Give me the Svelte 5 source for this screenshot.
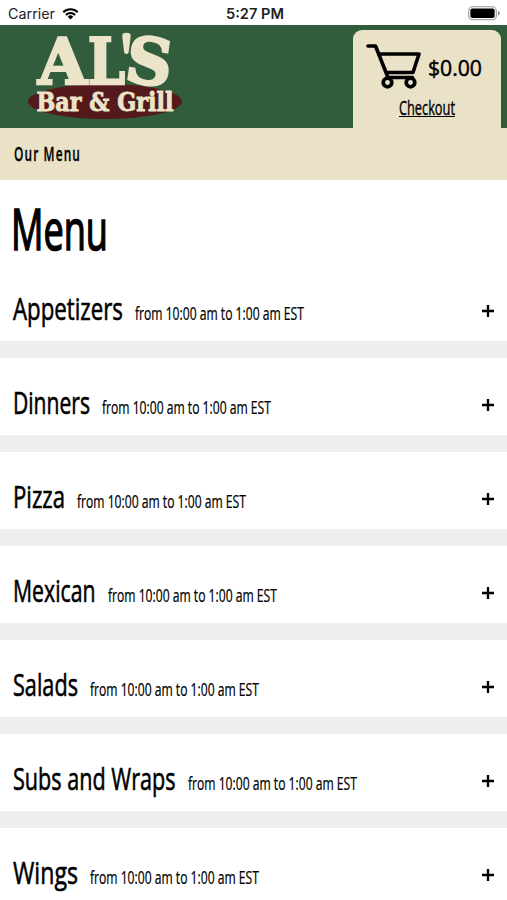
<script>
  const hours = 'from 10:00 am to 1:00 am EST';

  const categories = [
    { name: 'Appetizers', width: 110 },
    { name: 'Dinners', width: 77 },
    { name: 'Pizza', width: 52 },
    { name: 'Mexican', width: 82.5 },
    { name: 'Salads', width: 65 },
    { name: 'Subs and Wraps', width: 162.5 },
    { name: 'Wings', width: 65 }
  ];

  let open = $state('');

  function toggle(name) {
    open = open === name ? '' : name;
  }

  // Condense a text horizontally so that it fills the given width
  function squeeze(node, { x = 0, y = 0, width }) {
    const scale = width / node.getComputedTextLength();
    node.setAttribute('transform', `translate(${x} ${y}) scale(${scale} 1)`);
  }
</script>

{#snippet narrow(text, width, height)}
  <svg class="narrow" {width} {height}>
    <text use:squeeze={{ y: height, width }}>{text}</text>
  </svg>
{/snippet}

<div class="screen">
  <div class="status">
    <div class="carrier">
      {@render narrow('Carrier', 47, 11)}
      <svg class="wifi" width="17" height="13" viewBox="0 0 17 13">
        <path d="M1.3 5.2a10.2 10.2 0 0 1 14.4 0M3.9 7.9a6.5 6.5 0 0 1 9.2 0" fill="none" stroke="#000" stroke-width="2.1" />
        <path d="M5.7 9.7a4 4 0 0 1 5.6 0L8.5 12.5z" />
      </svg>
    </div>
    <div class="time">{@render narrow('5:27 PM', 58, 11)}</div>
    <svg class="battery" width="33" height="15" viewBox="0 0 33 15">
      <rect x="0.7" y="0.7" width="27.6" height="13" rx="3.8" fill="none" stroke="#999" stroke-width="1.1" />
      <rect x="2.4" y="2.4" width="24.2" height="9.6" rx="1.8" />
      <path d="M30 5v4.4q1.8-.6 1.8-2.2T30 5z" fill="#888" />
    </svg>
  </div>

  <header>
    <svg class="logo" width="156" height="90" viewBox="27 31 156 90">
      <ellipse cx="105" cy="101.5" rx="77" ry="17.5" fill="#541a1b" />
      <g class="name">
        <text use:squeeze={{ x: 38, y: 84, width: 49 }}>A</text>
        <text use:squeeze={{ x: 88, y: 84, width: 37 }}>L</text>
        <path d="M123.500 36q-.5-2 3-2t2.900 2l-2 16q-1 1.500-2 0z" />
        <g transform="rotate(8 149 60)">
          <text use:squeeze={{ x: 126.5, y: 84, width: 46 }}>S</text>
        </g>
      </g>
      <text class="tagline" use:squeeze={{ x: 36.5, y: 111, width: 137 }}>Bar &amp; Grill</text>
    </svg>

    <div class="cart">
      <div class="total">
        <svg width="56" height="46" viewBox="0 0 56 46">
          <path
            d="M2 3h7.5L22 34.5M13 11h40l-6 18.5H20M21.500 34.500h25"
            fill="none" stroke="#000" stroke-width="3.6" stroke-linecap="round" stroke-linejoin="round"
          />
          <circle cx="21.5" cy="39.5" r="4.300" fill="#eae2c7" stroke="#000" stroke-width="3.7" />
          <circle cx="44.5" cy="39.5" r="4.300" fill="#eae2c7" stroke="#000" stroke-width="3.7" />
        </svg>
        <span class="amount">{@render narrow('$0.00', 54, 16)}</span>
      </div>
      <a class="checkout" href="#checkout">{@render narrow('Checkout', 56, 14)}</a>
    </div>
  </header>

  <nav>{@render narrow('Our Menu', 67, 14)}</nav>

  <h1>{@render narrow('Menu', 97, 41)}</h1>

  <main>
    {#each categories as category}
      <button class="category" aria-expanded={open === category.name} onclick={() => toggle(category.name)}>
        <span class="title">{@render narrow(category.name, category.width, 23)}</span>
        <span class="hours">{@render narrow(hours, 169, 13)}</span>
        <svg class="plus" width="12" height="12" viewBox="0 0 12 12">
          <path d="M6 0v12M0 6h12" stroke="#000" stroke-width="2.4" />
        </svg>
      </button>
    {/each}
  </main>
</div>

<style>
  :global(body) {
    margin: 0;
    background: #fff;
  }

  .screen {
    height: 900px;
    overflow: hidden;
    font-family: 'Open Sans', 'Noto Sans', sans-serif;
    color: #000;
  }

  svg {
    display: block;
    flex: none;
  }

  .narrow {
    overflow: visible;
    fill: currentColor;
  }

  .status {
    display: grid;
    grid-template-columns: 1fr auto 1fr;
    box-sizing: border-box;
    height: 25px;
    padding: 1px 6px 0 8px;
    align-items: center;
    font-family: Inter, sans-serif;
    font-size: 14.2px;
    color: #222;
  }

  .carrier {
    display: flex;
    align-items: center;
    gap: 7px;
  }

  .time {
    font-weight: 600;
  }

  .battery {
    justify-self: end;
  }

  header {
    display: flex;
    justify-content: space-between;
    align-items: flex-end;
    height: 103px;
    padding: 0 6px 0 27px;
    background: #325d3d;
  }

  .logo {
    align-self: flex-start;
    margin-top: 6px;
    overflow: visible;
    fill: #ece4c9;
    font-family: 'DejaVu Serif', serif;
    font-weight: bold;
  }

  .name {
    font-size: 64px;
    stroke: #ece4c9;
    stroke-width: 2.6px;
  }

  .tagline {
    font-size: 26.5px;
    stroke: #ece4c9;
    stroke-width: 0.9px;
  }

  .cart {
    display: flex;
    flex-direction: column;
    align-items: center;
    box-sizing: border-box;
    width: 148px;
    height: 98px;
    padding-top: 13px;
    border-radius: 9px 9px 0 0;
    background: #eae2c7;
  }

  .total {
    display: flex;
    align-items: center;
    gap: 6px;
    margin-right: 6px;
  }

  .amount {
    padding-top: 4px;
    font-size: 22.5px;
    stroke: #000;
    stroke-width: 0.5px;
  }

  .checkout {
    margin-top: 12px;
    border-bottom: 1.5px solid #000;
    padding-bottom: 1px;
    font-size: 19.5px;
    stroke: #000;
    stroke-width: 0.4px;
    color: #000;
    text-decoration: none;
  }

  nav {
    box-sizing: border-box;
    height: 52px;
    padding: 19px 14px;
    background: #eae2c7;
    font-size: 19.5px;
    font-weight: 600;
    letter-spacing: 1.8px;
    stroke: #000;
    stroke-width: 0.3px;
  }

  h1 {
    margin: 29px 0 23px 11px;
    font-size: 57px;
    font-weight: 400;
    stroke: #000;
    stroke-width: 1.6px;
  }

  .category {
    display: flex;
    align-items: flex-end;
    box-sizing: border-box;
    width: 100%;
    height: 94px;
    padding: 0 13px 21px;
    border: 0;
    border-bottom: 17px solid #eee;
    background: #fff;
    color: #000;
    font-family: inherit;
    cursor: pointer;
  }

  .category:first-child {
    height: 85px;
  }

  .title {
    font-size: 31.5px;
    stroke: #000;
    stroke-width: 0.6px;
  }

  .hours {
    margin-left: 12px;
    font-size: 17.5px;
    stroke: #000;
    stroke-width: 0.25px;
  }

  .plus {
    margin: 0 0 3px auto;
  }
</style>
